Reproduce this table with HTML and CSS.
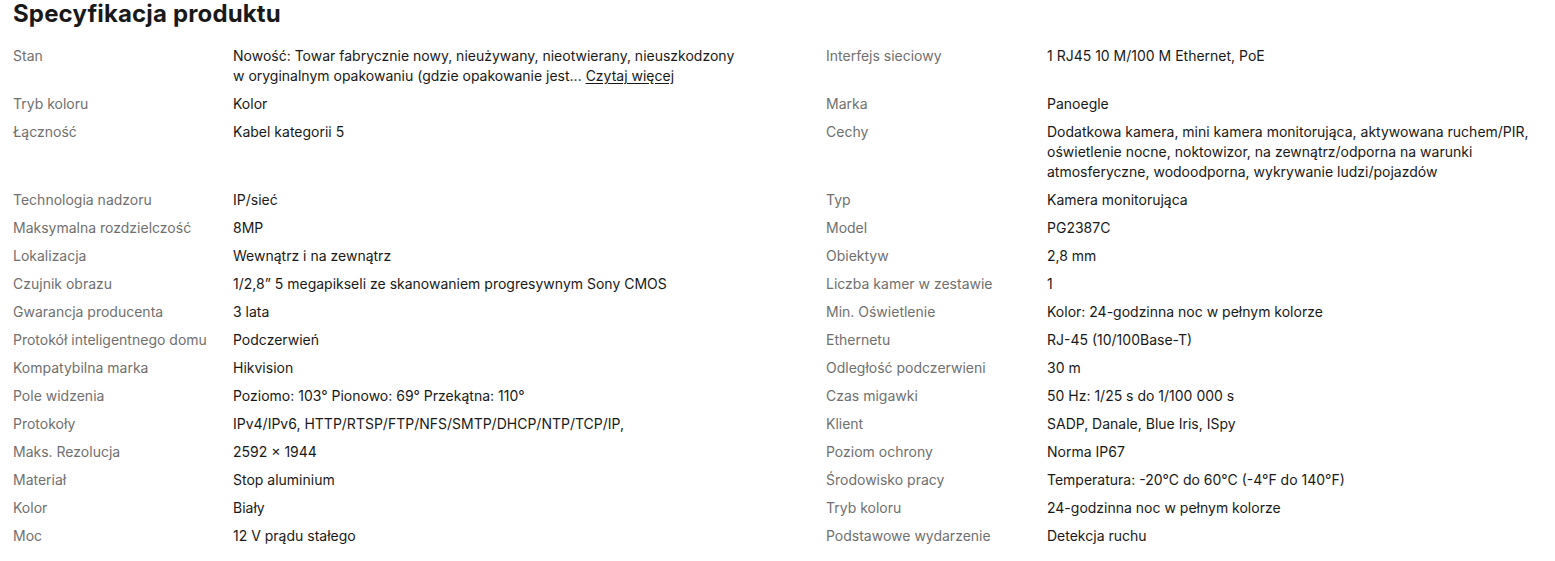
FILE: index.html
```html
<!DOCTYPE html>
<html lang="pl">
<head>
<meta charset="utf-8">
<title>Specyfikacja produktu</title>
<link rel="stylesheet" href="styles.css">
</head>
<body>
<section class="specs">
  <h2 class="specs__title">Specyfikacja produktu</h2>
  <div class="specs__grid">
    <div class="lbl">Stan</div>
    <div class="val val--left">Nowość: Towar fabrycznie nowy, nieużywany, nieotwierany, nieuszkodzony w oryginalnym opakowaniu (gdzie opakowanie jest... <a class="more" href="#">Czytaj więcej</a></div>
    <div class="lbl">Interfejs sieciowy</div>
    <div class="val">1 RJ45 10 M/100 M Ethernet, PoE</div>

    <div class="lbl">Tryb koloru</div>
    <div class="val val--left">Kolor</div>
    <div class="lbl">Marka</div>
    <div class="val">Panoegle</div>

    <div class="lbl">Łączność</div>
    <div class="val val--left">Kabel kategorii 5</div>
    <div class="lbl">Cechy</div>
    <div class="val">Dodatkowa kamera, mini kamera monitorująca, aktywowana ruchem/PIR, oświetlenie nocne, noktowizor, na zewnątrz/odporna na warunki atmosferyczne, wodoodporna, wykrywanie ludzi/pojazdów</div>

    <div class="lbl">Technologia nadzoru</div>
    <div class="val val--left">IP/sieć</div>
    <div class="lbl">Typ</div>
    <div class="val">Kamera monitorująca</div>

    <div class="lbl">Maksymalna rozdzielczość</div>
    <div class="val val--left">8MP</div>
    <div class="lbl">Model</div>
    <div class="val">PG2387C</div>

    <div class="lbl">Lokalizacja</div>
    <div class="val val--left">Wewnątrz i na zewnątrz</div>
    <div class="lbl">Obiektyw</div>
    <div class="val">2,8 mm</div>

    <div class="lbl">Czujnik obrazu</div>
    <div class="val val--left">1/2,8” 5 megapikseli ze skanowaniem progresywnym Sony CMOS</div>
    <div class="lbl">Liczba kamer w zestawie</div>
    <div class="val">1</div>

    <div class="lbl">Gwarancja producenta</div>
    <div class="val val--left">3 lata</div>
    <div class="lbl">Min. Oświetlenie</div>
    <div class="val">Kolor: 24-godzinna noc w pełnym kolorze</div>

    <div class="lbl">Protokół inteligentnego domu</div>
    <div class="val val--left">Podczerwień</div>
    <div class="lbl">Ethernetu</div>
    <div class="val">RJ-45 (10/100Base-T)</div>

    <div class="lbl">Kompatybilna marka</div>
    <div class="val val--left">Hikvision</div>
    <div class="lbl">Odległość podczerwieni</div>
    <div class="val">30 m</div>

    <div class="lbl">Pole widzenia</div>
    <div class="val val--left">Poziomo: 103° Pionowo: 69° Przekątna: 110°</div>
    <div class="lbl">Czas migawki</div>
    <div class="val">50 Hz: 1/25 s do 1/100 000 s</div>

    <div class="lbl">Protokoły</div>
    <div class="val val--left">IPv4/IPv6, HTTP/RTSP/FTP/NFS/SMTP/DHCP/NTP/TCP/IP,</div>
    <div class="lbl">Klient</div>
    <div class="val">SADP, Danale, Blue Iris, ISpy</div>

    <div class="lbl">Maks. Rezolucja</div>
    <div class="val val--left">2592 × 1944</div>
    <div class="lbl">Poziom ochrony</div>
    <div class="val">Norma IP67</div>

    <div class="lbl">Materiał</div>
    <div class="val val--left">Stop aluminium</div>
    <div class="lbl">Środowisko pracy</div>
    <div class="val">Temperatura: -20°C do 60°C (-4°F do 140°F)</div>

    <div class="lbl">Kolor</div>
    <div class="val val--left">Biały</div>
    <div class="lbl">Tryb koloru</div>
    <div class="val">24-godzinna noc w pełnym kolorze</div>

    <div class="lbl">Moc</div>
    <div class="val val--left">12 V prądu stałego</div>
    <div class="lbl">Podstawowe wydarzenie</div>
    <div class="val">Detekcja ruchu</div>
  </div>
</section>
</body>
</html>
```
FILE: styles.css
```css
html, body {
  margin: 0;
  padding: 0;
  background: #ffffff;
}
body {
  font-family: Inter, "Liberation Sans", sans-serif;
  color: #191919;
}
.specs {
  padding: 0 0 0 13px;
}
.specs__title {
  margin: 0 0 14px 0;
  font-size: 24px;
  line-height: 28px;
  font-weight: 700;
  letter-spacing: 0.15px;
  color: #191919;
}
.specs__grid {
  display: grid;
  grid-template-columns: 220px 593px 221px 1fr;
  font-size: 14px;
  line-height: 20px;
}
.lbl,
.val {
  padding: 4px 0;
}
.lbl {
  color: #707070;
  padding-right: 12px;
}
.val {
  color: #191919;
}
.val--left {
  padding-right: 84px;
}
.more {
  color: #191919;
  text-decoration: underline;
  text-underline-offset: 2px;
}
```
